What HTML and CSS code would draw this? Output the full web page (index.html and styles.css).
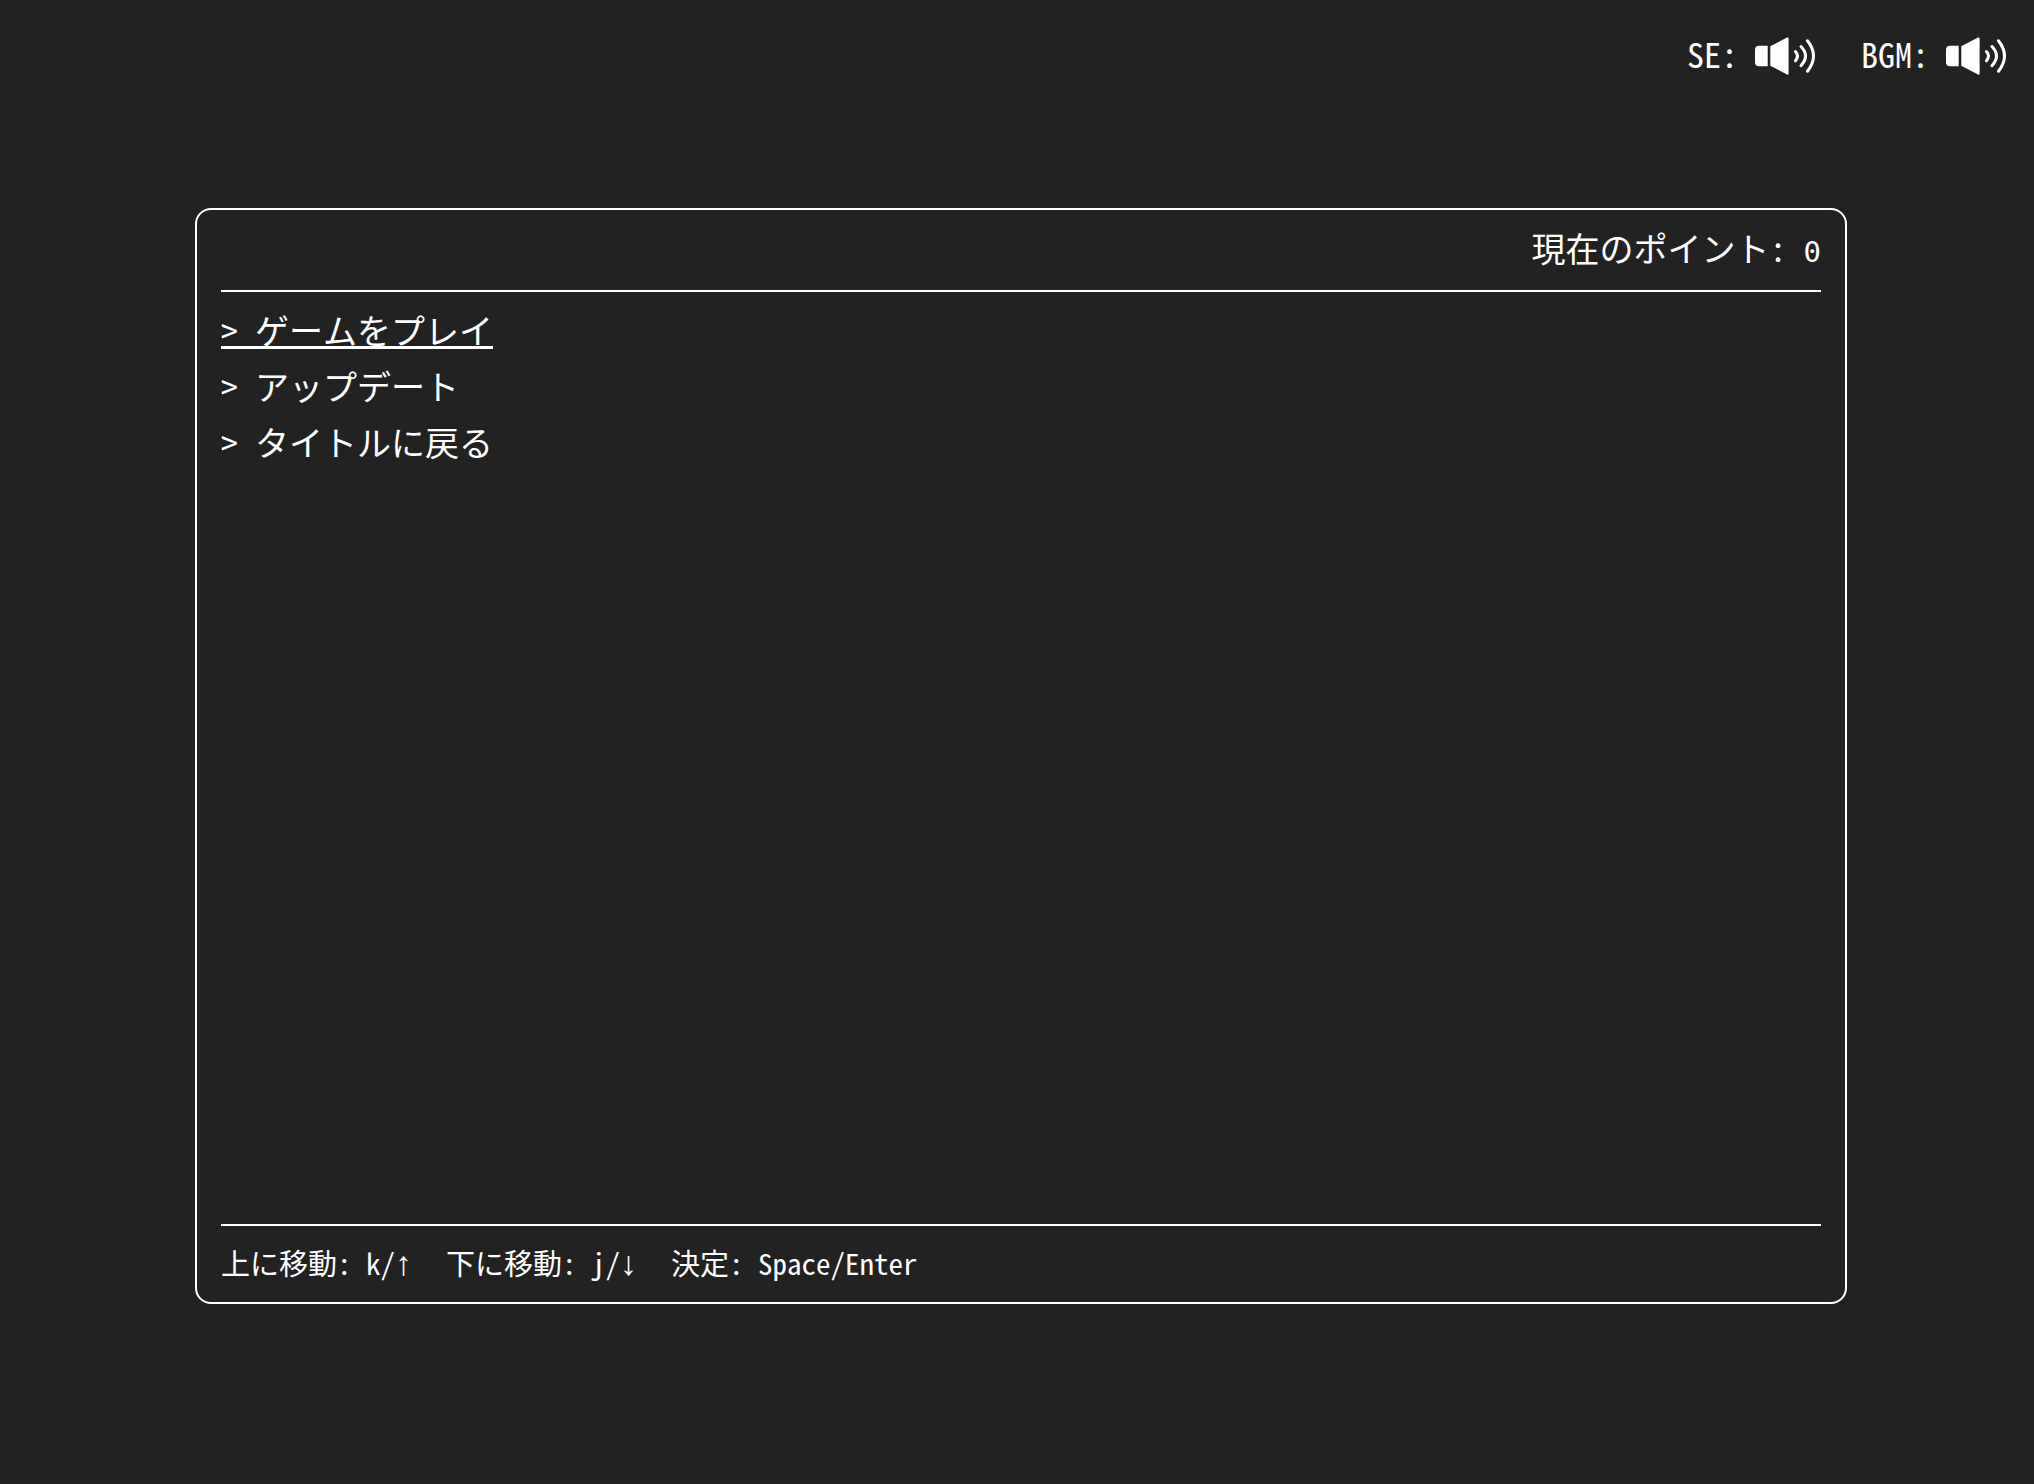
FILE: index.html
```html
<!DOCTYPE html>
<html lang="ja">
<head>
<meta charset="utf-8">
<meta name="viewport" content="width=device-width, initial-scale=1">
<title>メニュー</title>
<link rel="stylesheet" href="styles.css">
</head>
<body>
<svg class="symbols" aria-hidden="true">
  <symbol id="speaker" viewBox="0 0 62 40">
    <path fill="currentColor" d="M5 9.700H13.700V30.300H5Q1 30.300 1 26.300V13.700Q1 9.700 5 9.700Z"/>
    <path fill="currentColor" d="M16.300 10.300L33 1.500Q34.600 1 34.600 2.500V37.500Q34.600 39.300 33 38.500L16.300 29.700Z"/>
    <path fill="none" stroke="currentColor" stroke-width="3" stroke-linecap="round" d="M41.500 15.500Q45.500 20 41.500 24.800M47 10.500Q56 20 47 29.700M53.500 4.800Q65.500 20 53.500 35.200"/>
  </symbol>
</svg>
<header class="sound">
  <button class="sound-toggle" type="button"><span class="sound-label">SE:</span><svg class="sound-icon" aria-hidden="true"><use href="#speaker"/></svg></button>
  <button class="sound-toggle" type="button"><span class="sound-label">BGM:</span><svg class="sound-icon" aria-hidden="true"><use href="#speaker"/></svg></button>
</header>
<main class="panel">
  <p class="points">現在のポイント: <span class="score">0</span></p>
  <nav class="menu">
    <a class="menu-item selected" href="#play">&gt; ゲームをプレイ</a>
    <a class="menu-item" href="#update">&gt; アップデート</a>
    <a class="menu-item" href="#title">&gt; タイトルに戻る</a>
  </nav>
  <footer class="keys">
    <span>上に移動: k/<span class="arrow">↑</span></span>
    <span>下に移動: j/<span class="arrow">↓</span></span>
    <span>決定: Space/Enter</span>
  </footer>
</main>
</body>
</html>
```
FILE: styles.css
```css
* {
  box-sizing: border-box;
}

body {
  display: flex;
  flex-direction: column;
  min-height: 100vh;
  margin: 0;
  background: #222;
  color: #fff;
  font-family: "Noto Sans Mono CJK JP", "Noto Sans CJK JP", monospace;
  font-feature-settings: "hwid";
  font-size: 34px;
  font-weight: 500;
  line-height: 56px;
}

.symbols {
  display: none;
}

.sound {
  display: flex;
  justify-content: flex-end;
  gap: 45px;
  padding: 26px 27px 0;
}

.sound-toggle {
  display: flex;
  align-items: center;
  gap: 16px;
  padding: 0;
  border: 0;
  background: none;
  color: inherit;
  font: inherit;
  font-feature-settings: inherit;
  cursor: pointer;
}

.sound-label {
  padding-bottom: 4px;
}

.sound-icon {
  width: 62px;
  height: 40px;
}

.panel {
  display: flex;
  flex: 1;
  flex-direction: column;
  margin: 122px 187px 180px 195px;
  padding: 0 24px;
  border: 2px solid #fff;
  border-radius: 16px;
}

.points {
  margin: 0;
  padding: 10px 0 14px;
  border-bottom: 2px solid #fff;
  text-align: right;
}

.score {
  font-family: "DejaVu Sans Mono", monospace;
  font-size: 29px;
  line-height: 1;
}

.menu {
  display: flex;
  flex: 1;
  flex-direction: column;
  align-items: flex-start;
  padding: 10px 0;
}

.menu-item {
  color: inherit;
  text-decoration: none;
}

.selected {
  text-decoration: underline;
  text-decoration-thickness: 3px;
  text-decoration-skip-ink: none;
}

.keys {
  display: flex;
  flex-wrap: wrap;
  gap: 0 34px;
  padding: 8px 0 12px;
  border-top: 2px solid #fff;
  font-size: 29px;
}

.arrow {
  font-family: "Liberation Sans", sans-serif;
  font-size: 34px;
  line-height: 1;
}
```
